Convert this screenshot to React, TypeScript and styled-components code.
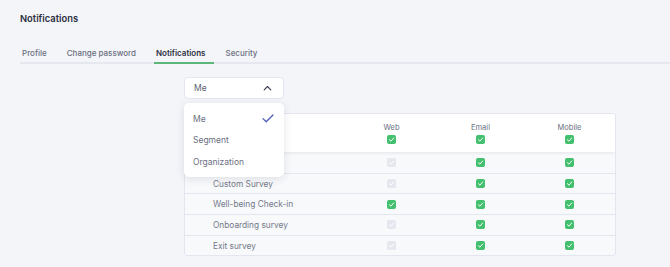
import styled, { createGlobalStyle } from 'styled-components';
import React from 'react';

const GlobalStyle = createGlobalStyle`
	body {
		margin: 0;
		background: #f4f5f9;
		font-family: Inter, "Noto Sans", sans-serif;
	}
`;

interface Row {
	label: string;
	web: boolean;
}

// first row's label sits under the open menu
const rows: Row[] = [
	{ label: '', web: false },
	{ label: 'Custom Survey', web: false },
	{ label: 'Well-being Check-in', web: true },
	{ label: 'Onboarding survey', web: false },
	{ label: 'Exit survey', web: false },
];

const tabs = ['Profile', 'Change password', 'Notifications', 'Security'];

const Check = ({ on }: { on: boolean }) => (
	<Box $on={on}>
		<svg width="7" height="7" viewBox="0 0 10 10" fill="none">
			<path d="M2 5.3 L4.2 7.4 L8.2 2.8" stroke="#fff" strokeWidth="1.4" strokeLinecap="round" strokeLinejoin="round" />
		</svg>
	</Box>
);

export default function App() {
	return (
		<Page>
			<GlobalStyle />
			<Title>Notifications</Title>
			<Tabs>
				{tabs.map(t => (
					<Tab key={t} $active={t === 'Notifications'}>{t}</Tab>
				))}
			</Tabs>
			<Content>
				<SelectWrap>
					<Select>
						<span>Me</span>
						<svg width="9" height="6" viewBox="0 0 9 6" fill="none">
							<path d="M1.2 4.8 L4.5 1.5 L7.8 4.8" stroke="#3b3f52" strokeWidth="1.1" strokeLinecap="round" strokeLinejoin="round" />
						</svg>
					</Select>
					<Menu>
						<MenuItem>
							<span>Me</span>
							<svg width="12" height="9" viewBox="0 0 12 9" fill="none">
								<path d="M1 4.6 L4.2 7.8 L11 1" stroke="#4d5cb3" strokeWidth="1.3" strokeLinecap="round" strokeLinejoin="round" />
							</svg>
						</MenuItem>
						<MenuItem>Segment</MenuItem>
						<MenuItem>Organization</MenuItem>
					</Menu>
				</SelectWrap>
				<Table>
					<HeaderRow>
						<span />
						<HeadCell><HeadLabel>Web</HeadLabel><Check on /></HeadCell>
						<HeadCell><HeadLabel>Email</HeadLabel><Check on /></HeadCell>
						<HeadCell><HeadLabel>Mobile</HeadLabel><Check on /></HeadCell>
					</HeaderRow>
					{rows.map((r, i) => (
						<BodyRow key={i}>
							<RowLabel>{r.label}</RowLabel>
							<Cell><Check on={r.web} /></Cell>
							<Cell><Check on /></Cell>
							<Cell><Check on /></Cell>
						</BodyRow>
					))}
				</Table>
			</Content>
		</Page>
	);
}

const Page = styled.div`
	width: 670px;
	height: 267px;
	overflow: hidden;
`;

const Title = styled.div`
	padding: 12px 20px 0;
	height: 14px;
	font-size: 9.4px;
	font-weight: 600;
	color: #2b2f3f;
	line-height: 14px;
`;

const Tabs = styled.div`
	margin: 17px 0 0 20px;
	display: flex;
	border-bottom: 2px solid #e6e8f0;
`;

const Tab = styled.div<{ $active?: boolean }>`
	padding: 2px 9px 0 2px;
	margin-right: 9px;
	height: 19px;
	line-height: 17px;
	font-size: 8px;
	font-weight: ${p => (p.$active ? 600 : 500)};
	color: ${p => (p.$active ? '#2b2f3f' : '#6a6f80')};
	box-shadow: ${p => (p.$active ? 'inset 0 -2px 0 #5cb67a' : 'none')};
	margin-bottom: -2px;
`;

const Content = styled.div`
	padding: 13px 0 0 184px;
	width: 432px;
`;

const SelectWrap = styled.div`
	position: relative;
	width: 100px;
`;

const Select = styled.div`
	height: 22px;
	box-sizing: border-box;
	background: #fff;
	border: 1px solid #e3e6ee;
	border-radius: 4px;
	display: flex;
	align-items: center;
	justify-content: space-between;
	padding: 0 11px 0 9px;
	font-size: 8.5px;
	color: #5a5f72;
`;

const Menu = styled.div`
	position: absolute;
	top: 26px;
	left: 0;
	width: 100px;
	box-sizing: border-box;
	background: #fff;
	border-radius: 5px;
	box-shadow: 0 2px 8px rgba(40, 45, 70, 0.12);
	padding: 5px 0 4px;
	z-index: 2;
`;

const MenuItem = styled.div`
	height: 21.5px;
	display: flex;
	align-items: center;
	justify-content: space-between;
	padding: 0 10px 0 9px;
	font-size: 8.5px;
	color: #6a6f80;
`;

const Table = styled.div`
	margin-top: 14px;
	border: 1px solid #e3e6ee;
	border-radius: 3px;
	background: #f8f9fb;
	overflow: hidden;
`;

const grid = `
	display: grid;
	grid-template-columns: 162px 89px 89px 89px;
`;

const HeaderRow = styled.div`
	${grid}
	height: 38px;
	background: #fff;
	box-shadow: 0 1px 3px rgba(40, 45, 70, 0.1);
	position: relative;
`;

const HeadCell = styled.div`
	display: flex;
	flex-direction: column;
	align-items: center;
	justify-content: center;
	gap: 3px;
	padding-top: 1px;
`;

const HeadLabel = styled.span`
	font-size: 7.5px;
	color: #6a6f80;
	line-height: 9px;
`;

const BodyRow = styled.div`
	${grid}
	height: 20.7px;
	border-top: 1px solid #e3e6ee;
	box-sizing: border-box;
	&:nth-child(2) {
		border-top: none;
	}
`;

const RowLabel = styled.div`
	padding-left: 28px;
	display: flex;
	align-items: center;
	font-size: 8.3px;
	color: #737889;
`;

const Cell = styled.div`
	display: flex;
	align-items: center;
	justify-content: center;
`;

const Box = styled.span<{ $on: boolean }>`
	width: 9px;
	height: 9px;
	border-radius: 2px;
	background: ${p => (p.$on ? '#43c06d' : '#e5e7ee')};
	display: inline-flex;
	align-items: center;
	justify-content: center;
`;
